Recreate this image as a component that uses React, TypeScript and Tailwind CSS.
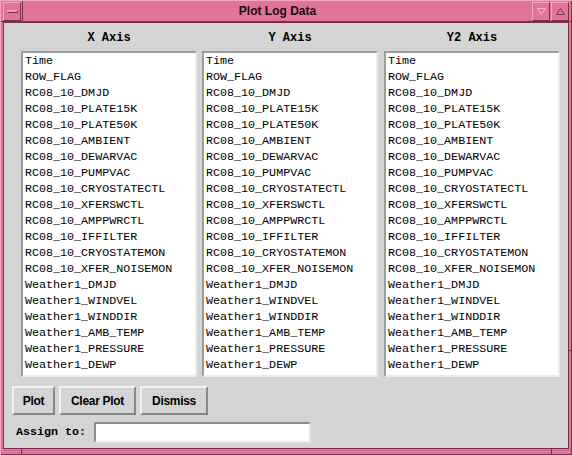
import React from "react";

const items = [
  "Time",
  "ROW_FLAG",
  "RC08_10_DMJD",
  "RC08_10_PLATE15K",
  "RC08_10_PLATE50K",
  "RC08_10_AMBIENT",
  "RC08_10_DEWARVAC",
  "RC08_10_PUMPVAC",
  "RC08_10_CRYOSTATECTL",
  "RC08_10_XFERSWCTL",
  "RC08_10_AMPPWRCTL",
  "RC08_10_IFFILTER",
  "RC08_10_CRYOSTATEMON",
  "RC08_10_XFER_NOISEMON",
  "Weather1_DMJD",
  "Weather1_WINDVEL",
  "Weather1_WINDDIR",
  "Weather1_AMB_TEMP",
  "Weather1_PRESSURE",
  "Weather1_DEWP",
];

const mono = { fontFamily: '"Liberation Mono", "DejaVu Sans Mono", monospace' };
const sans = { fontFamily: '"Liberation Sans", Arial, sans-serif' };

function Col({ title, className }: { title: string; className?: string }) {
  return (
    <div className={"flex flex-col w-[176px] " + (className ?? "")}>
      <div
        className="h-[16px] leading-[16px] text-center font-bold text-[12px] text-black mb-[5px]"
        style={mono}
      >
        {title}
      </div>
      <div className="h-[326px] bg-white border-2 border-t-[#9c9c9c] border-l-[#9c9c9c] border-b-[#ececec] border-r-[#ececec] pl-[2px] overflow-hidden">
        {items.map((i) => (
          <div
            key={i}
            className="h-[16px] leading-[16px] text-[11.7px] text-black whitespace-nowrap"
            style={mono}
          >
            {i}
          </div>
        ))}
      </div>
    </div>
  );
}

function Btn({ label, w }: { label: string; w: string }) {
  return (
    <div
      className={
        "h-[29px] flex items-center justify-center bg-[#d4d4d4] border-2 border-t-[#f2f2f2] border-l-[#f2f2f2] border-b-[#888888] border-r-[#888888] text-[12px] font-bold text-black tracking-[-0.3px] " +
        w
      }
      style={sans}
    >
      {label}
    </div>
  );
}

function TitleBtn({ children }: { children: React.ReactNode }) {
  return (
    <div className="w-[18px] h-[19px] flex items-center justify-center bg-[#e07597] border border-t-[#f4a6c2] border-l-[#f4a6c2] border-b-[#7a2f4e] border-r-[#7a2f4e]">
      {children}
    </div>
  );
}

export default function App() {
  return (
    <div className="w-[572px] h-[455px] bg-[#e07597] relative flex flex-col border-l border-t border-l-[#f4a6c2] border-t-[#f4a6c2] overflow-hidden">
      {/* title bar */}
      <div className="h-[21px] flex items-stretch pl-[2px] pr-[3px] border-b border-b-[#7a2f4e]">
        <div className="pt-[1px]">
          <TitleBtn>
            <div className="w-[11px] h-[3px] bg-[#e88aab] border border-t-[#f4a6c2] border-l-[#f4a6c2] border-b-[#7a2f4e] border-r-[#7a2f4e]" />
          </TitleBtn>
        </div>
        <div
          className="flex-1 flex items-center justify-center text-[12px] font-bold text-[#1a0a10] border-l border-l-[#7a2f4e] ml-[1px]"
          style={sans}
        >
          Plot Log Data
        </div>
        <div className="flex pt-[1px] gap-[1px]">
          <TitleBtn>
            <svg width="9" height="7" viewBox="0 0 9 7">
              <path d="M0.5 0.5 L8.5 0.5 L4.5 6.5 Z" fill="none" stroke="#f8b8d0" strokeWidth="1" />
            </svg>
          </TitleBtn>
          <TitleBtn>
            <svg width="9" height="7" viewBox="0 0 9 7">
              <path d="M0.5 6.5 L8.5 6.5 L4.5 0.5 Z" fill="none" stroke="#7a2f4e" strokeWidth="1" />
            </svg>
          </TitleBtn>
        </div>
      </div>

      {/* content */}
      <div className="ml-[2px] mr-[3px] mb-[6px] h-[427px] bg-[#d4d4d4] border border-t-[#7a2f4e] border-l-[#7a2f4e] border-b-[#7a2f4e] border-r-[#7a2f4e] flex flex-col">
        <div className="flex pt-[7px] pl-[17px]">
          <Col title="X Axis" />
          <Col title="Y Axis" className="ml-[5px]" />
          <Col title="Y2 Axis" className="ml-[6px]" />
        </div>
        <div className="flex gap-[4px] pl-[8px] mt-[9px]">
          <Btn label="Plot" w="w-[43px]" />
          <Btn label="Clear Plot" w="w-[77px]" />
          <Btn label="Dismiss" w="w-[68px]" />
        </div>
        <div className="flex items-center mt-[7px] pl-[12px]">
          <div className="text-[11.7px] font-bold text-black w-[78px]" style={mono}>
            Assign to:
          </div>
          <div className="w-[217px] h-[21px] bg-white border-2 border-t-[#8c8c8c] border-l-[#8c8c8c] border-b-[#e6e6e6] border-r-[#e6e6e6]" />
        </div>
      </div>

      {/* resize handle ticks */}
      <div className="absolute left-0 top-[20px] w-[3px] h-[1px] bg-[#7a2f4e]" />
      <div className="absolute left-[20px] bottom-0 w-[1px] h-[6px] bg-[#7a2f4e]" />
      <div className="absolute right-[20px] bottom-0 w-[1px] h-[6px] bg-[#7a2f4e]" />
      <div className="absolute right-0 bottom-[104px] w-[4px] h-[1px] bg-[#7a2f4e]" />
      <div className="absolute right-0 top-0 w-[1px] h-full bg-[#7a2f4e]" />
      <div className="absolute left-0 bottom-0 h-[1px] w-full bg-[#7a2f4e]" />
    </div>
  );
}
